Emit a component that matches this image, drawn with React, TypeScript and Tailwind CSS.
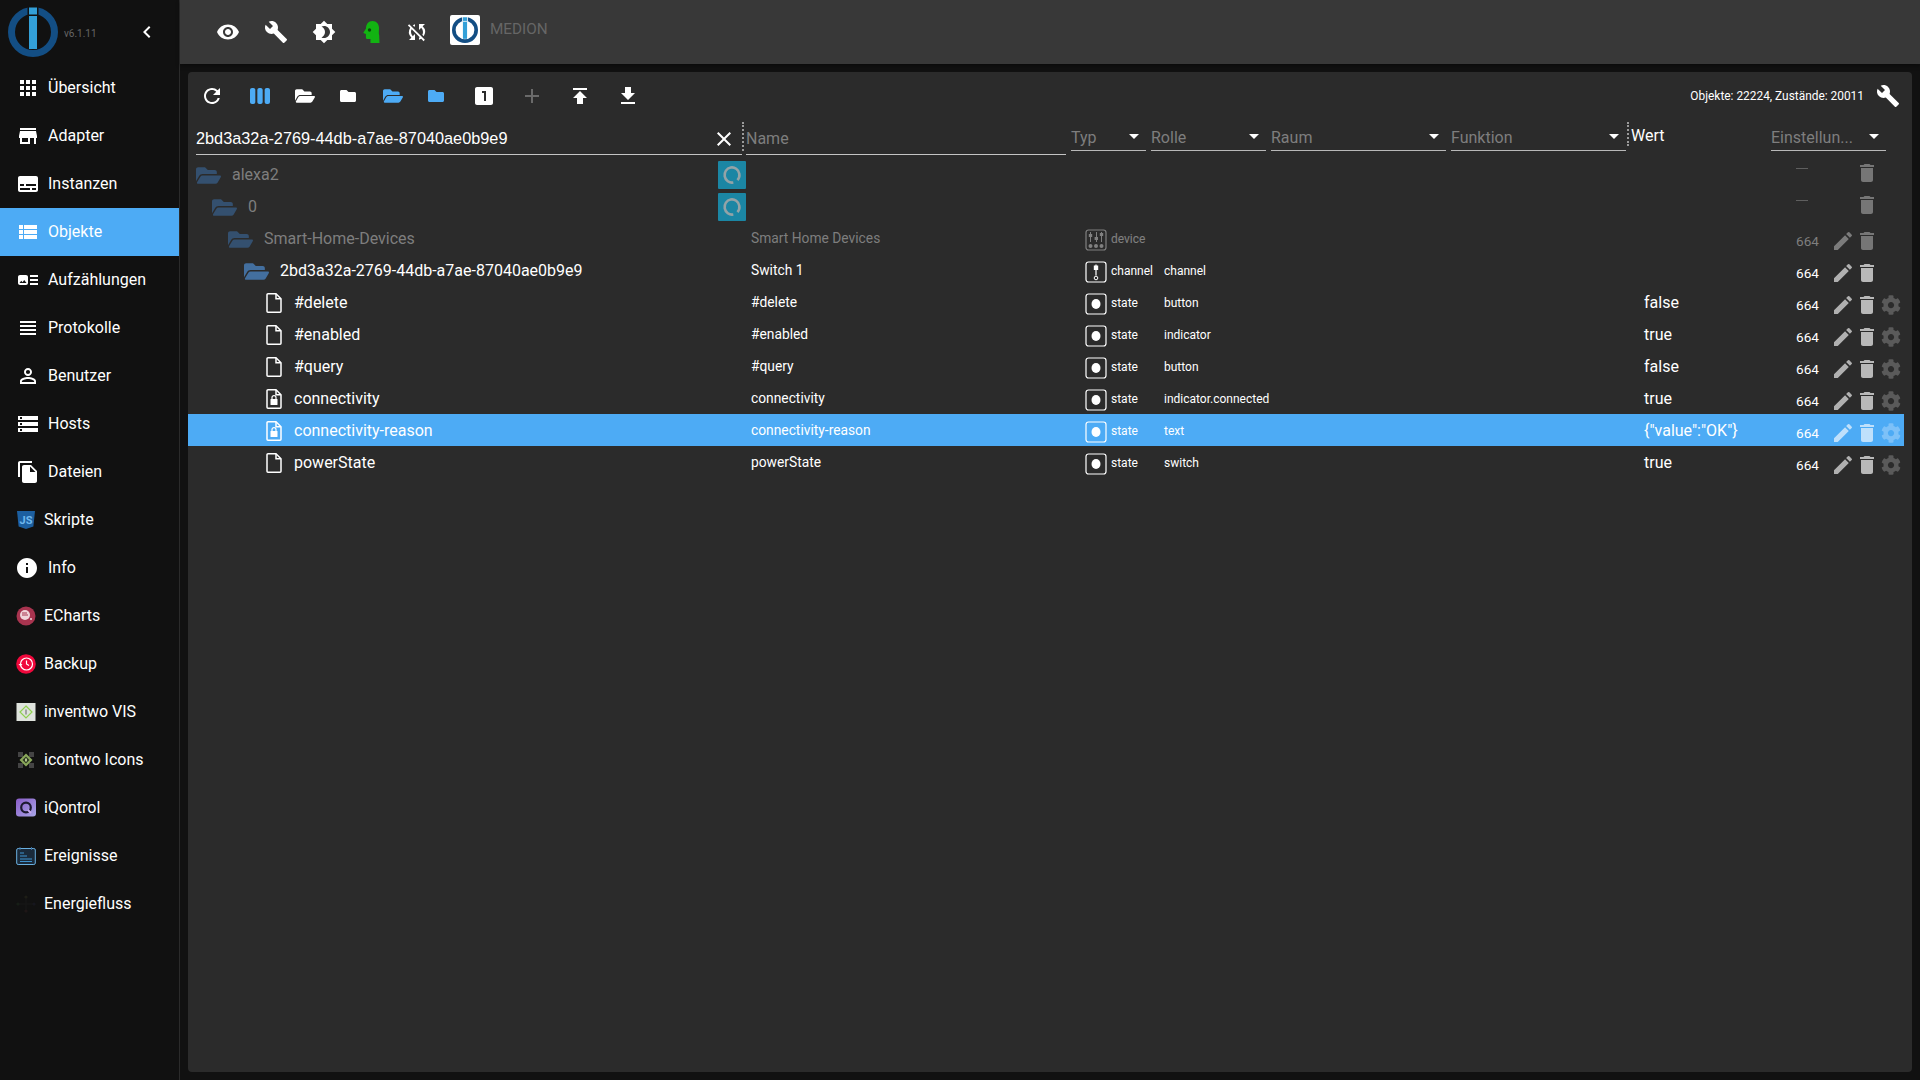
import React from "react";
import {
  MdApps, MdStore, MdSubtitles, MdViewList, MdArtTrack, MdViewHeadline, MdPersonOutline, MdStorage, MdFileCopy, MdInfo,
  MdRemoveRedEye, MdBuild, MdSyncDisabled, MdRefresh, MdViewWeek, MdLooksOne, MdAdd, MdGetApp,
  MdEdit, MdDelete, MdClose, MdChevronLeft, MdBrightness4, MdPublish,
} from "react-icons/md";
import { FaCog, FaFolderOpen, FaFolder } from "react-icons/fa";

const Logo = ({ size, bg }: { size: number; bg: string }) => (
  <svg width={size} height={size} viewBox="0 0 50 50">
    <circle cx="25" cy="25" r="21.5" fill="none" stroke="#134e84" strokeWidth="7" />
    <rect x="19.5" y="0" width="11" height="9" fill={bg} />
    <rect x="21" y="0.5" width="8" height="7" fill="#33a0d8" />
    <rect x="21" y="9" width="8" height="33" fill="#33a0d8" />
  </svg>
);

const Js = () => (
  <svg width="20" height="20" viewBox="0 0 20 20">
    <path d="M1 1h18l-1.6 15.5L10 19l-7.4-2.5z" fill="#1c5fa0" />
    <text x="10" y="13.5" textAnchor="middle" fontSize="11" fontWeight="700" fill="#6fb8ee" fontFamily="Roboto">JS</text>
  </svg>
);
const ECh = () => (
  <svg width="20" height="20" viewBox="0 0 20 20">
    <circle cx="10" cy="10" r="9.5" fill="#a8344f" />
    <circle cx="9" cy="9" r="5" fill="#f0d5da" />
    <path d="M6 9h6M6 7h5" stroke="#a8344f" strokeWidth="1" />
    <circle cx="15" cy="13" r="1" fill="#f0d5da" />
  </svg>
);
const Bak = () => (
  <svg width="20" height="20" viewBox="0 0 20 20">
    <circle cx="10" cy="10" r="9.8" fill="#f0083c" />
    <circle cx="10.5" cy="10" r="6" fill="none" stroke="#fff" strokeWidth="1.2" />
    <path d="M10.5 6.5V10l2.5 1.5" fill="none" stroke="#fff" strokeWidth="1.2" />
    <path d="M2.5 10h4l-2 2.2z" fill="#fff" />
  </svg>
);
const Inv = () => (
  <svg width="20" height="20" viewBox="0 0 20 20">
    <rect x="0.5" y="1" width="19" height="18" fill="#dfe3dd" />
    <path d="M10 4l6 6-6 6-6-6z" fill="none" stroke="#8fd050" strokeWidth="1.2" />
    <rect x="9.5" y="7.5" width="1" height="5" fill="#666" />
  </svg>
);
const Ico = () => (
  <svg width="20" height="20" viewBox="0 0 20 20">
    <g fill="#444"><rect x="2" y="2" width="5" height="5" /><rect x="13" y="2" width="5" height="5" /><rect x="2" y="13" width="5" height="5" /><rect x="13" y="13" width="5" height="5" /></g>
    <path d="M10 3.5L16.5 10 10 16.5 3.5 10z" fill="#8aa85a" />
    <path d="M10 6.5L13.5 10 10 13.5 6.5 10z" fill="#2e3a22" />
    <rect x="9" y="8.5" width="2" height="3" fill="#b5c890" />
  </svg>
);
const IQ = () => (
  <svg width="20" height="20" viewBox="0 0 20 20">
    <defs>
      <linearGradient id="iq" x1="0" y1="0" x2="1" y2="1"><stop offset="0" stopColor="#8a5cc8" /><stop offset="1" stopColor="#a9a6e8" /></linearGradient>
    </defs>
    <rect x="0" y="0.5" width="20" height="18" rx="3" fill="url(#iq)" />
    <circle cx="10" cy="9.5" r="4.8" fill="none" stroke="#1d1a30" strokeWidth="2.2" />
    <path d="M12 12l3 3" stroke="#c9a9f0" strokeWidth="2" />
  </svg>
);
const Ev = () => (
  <svg width="20" height="20" viewBox="0 0 20 20">
    <rect x="0.7" y="2.5" width="18.6" height="16" rx="1.5" fill="#1a2a3a" stroke="#6ab0e0" strokeWidth="1" />
    <path d="M4 1v3M15.5 1v3" stroke="#3a6a9a" strokeWidth="1" />
    <path d="M4 7h4M4 10h7M4 13h12M4 15.5h12" stroke="#3f93cf" strokeWidth="1.1" />
  </svg>
);
const En = () => (
  <svg width="20" height="20" viewBox="0 0 20 20" opacity="0.5">
    <circle cx="10" cy="3" r="1.6" fill="#2c2c1c" />
    <circle cx="2" cy="10" r="1.6" fill="#1c2c1c" />
    <circle cx="18" cy="10" r="1.6" fill="#1c1c2c" />
    <circle cx="10" cy="17" r="1.6" fill="#2c1c1c" />
    <path d="M10 4v12M3 10h14" stroke="#222" strokeWidth="0.8" />
  </svg>
);

const navTop: [any, string][] = [
  [MdApps, "Übersicht"],
  [MdStore, "Adapter"],
  [MdSubtitles, "Instanzen"],
  [MdViewList, "Objekte"],
  [MdArtTrack, "Aufzählungen"],
  [MdViewHeadline, "Protokolle"],
  [MdPersonOutline, "Benutzer"],
  [MdStorage, "Hosts"],
  [MdFileCopy, "Dateien"],
];
const navImg: [any, string][] = [
  [Js, "Skripte"],
  [null, "Info"],
  [ECh, "ECharts"],
  [Bak, "Backup"],
  [Inv, "inventwo VIS"],
  [Ico, "icontwo Icons"],
  [IQ, "iQontrol"],
  [Ev, "Ereignisse"],
  [En, "Energiefluss"],
];

const Sidebar = () => (
  <aside className="w-[180px] shrink-0 bg-[#111111] border-r border-[#2b2b2b] h-[1080px] text-white">
    <div className="h-[64px] flex items-center pl-[8px]">
      <Logo size={50} bg="#111111" />
      <span className="ml-[6px] mt-[2px] text-[10px] text-[#666666] w-[71px]">v6.1.11</span>
      <MdChevronLeft size={24} className="text-white" />
    </div>
    {navTop.map(([I, t]) => (
      <div key={t} className={`h-[48px] flex items-center pl-[16px] ${t === "Objekte" ? "bg-[#4dabf5]" : ""}`}>
        <I size={24} className="shrink-0" />
        <span className="ml-[8px] text-[16px]">{t}</span>
      </div>
    ))}
    {navImg.map(([I, t]) => (
      <div key={t} className="h-[48px] flex items-center pl-[16px]">
        {I ? <I /> : <MdInfo size={24} className="shrink-0 -ml-[1px]" />}
        <span className={`text-[16px] ${I ? "ml-[8px]" : "ml-[9px]"}`}>{t}</span>
      </div>
    ))}
  </aside>
);

const TopBar = () => (
  <div className="h-[64px] bg-[#383838] flex items-center pl-[24px] shadow-[0_2px_4px_rgba(0,0,0,0.4)]">
    {[MdRemoveRedEye, MdBuild, MdBrightness4].map((I, i) => (
      <div key={i} className="w-[48px] h-[48px] flex items-center justify-center text-white"><I size={24} /></div>
    ))}
    <div className="w-[46px] h-[48px] flex items-center justify-center">
      <svg width="17" height="22" viewBox="0 0 17 22">
        <path d="M9.5 0C13.5 0 16 3 16 7c0 3-.5 5 .2 7.5l.3 7.5H7.5v-4H4.5c-1.2 0-1.6-.8-1.6-1.8V13L.8 12.3C.3 12 .4 11.4.8 11L3 7.5C3 3 5.5 0 9.5 0z" fill="#12b312" />
        <circle cx="6.5" cy="9" r="1.7" fill="#0b4a0b" />
      </svg>
    </div>
    <div className="w-[46px] h-[48px] flex items-center justify-center text-white"><MdSyncDisabled size={24} /></div>
    <div className="ml-[10px] mb-[5px] w-[30px] h-[30px] bg-white rounded-[2px] flex items-center justify-center">
      <Logo size={26} bg="#ffffff" />
    </div>
    <span className="ml-[10px] mb-[6px] text-[15.3px] text-[#666666]">MEDION</span>
  </div>
);

const Btn = ({ w, c, children }: { w: string; c: string; children: React.ReactNode }) => (
  <div className={`${w} h-[48px] flex items-center justify-center ${c}`}>{children}</div>
);

const Toolbar = () => (
  <div className="h-[48px] flex items-center">
    <Btn w="w-[48px]" c="text-white"><MdRefresh size={24} /></Btn>
    <Btn w="w-[47px]" c="text-[#4dabf5]"><MdViewWeek size={24} /></Btn>
    <Btn w="w-[44px]" c="text-white"><FaFolderOpen size={20} /></Btn>
    <Btn w="w-[44px]" c="text-white"><FaFolder size={16} className="-translate-x-[1px]" /></Btn>
    <Btn w="w-[44px]" c="text-[#4dabf5]"><FaFolderOpen size={20} /></Btn>
    <Btn w="w-[44px]" c="text-[#4dabf5]"><FaFolder size={16} className="-translate-x-[1px]" /></Btn>
    <Btn w="w-[49px]" c="text-white"><MdLooksOne size={24} /></Btn>
    <Btn w="w-[48px]" c="text-[#6a6a6a]"><MdAdd size={24} /></Btn>
    <Btn w="w-[48px]" c="text-white"><MdPublish size={24} /></Btn>
    <Btn w="w-[48px]" c="text-white"><MdGetApp size={24} /></Btn>
    <div className="ml-auto flex items-center pr-[12px]">
      <span className="text-[11.9px] text-white pt-[2px]">Objekte: 22224, Zustände: 20011</span>
      <MdBuild size={24} className="ml-[12px] text-white" />
    </div>
  </div>
);

const Tri = () => (
  <svg width="10" height="5" viewBox="0 0 10 5" className="shrink-0"><path d="M0 0h10L5 5z" fill="#ffffff" /></svg>
);

const Sel = ({ w, ml, label }: { w: string; ml: string; label: string }) => (
  <div className={`${w} ${ml} h-[28px] border-b border-[#b8b8b8] flex items-center justify-between pr-[7px] text-[16px] text-[#7e7e7e]`}>
    <span className="mt-[2px]">{label}</span>
    <Tri />
  </div>
);

const Filter = () => (
  <div className="h-[38px] flex items-start">
    <div className="ml-[8px] w-[546px] h-[35px] border-b border-[#c4c4c4] flex items-center justify-between pr-[6px] pt-[3px]">
      <span className="text-[16.3px] text-white font-['Liberation_Sans']">2bd3a32a-2769-44db-a7ae-87040ae0b9e9</span>
      <MdClose size={24} className="text-white" />
    </div>
    <div className="w-[4px] h-[29px] mt-[2px] border-l-2 border-dotted border-[#9a9a9a]" />
    <div className="w-[320px] h-[35px] border-b border-[#c4c4c4] flex items-center pt-[3px] text-[16px] text-[#7e7e7e]">Name</div>
    <div className="flex items-start mt-[3px] flex-1">
      <Sel w="w-[75px]" ml="ml-[5px]" label="Typ" />
      <Sel w="w-[115px]" ml="ml-[5px]" label="Rolle" />
      <Sel w="w-[175px]" ml="ml-[5px]" label="Raum" />
      <Sel w="w-[175px]" ml="ml-[5px]" label="Funktion" />
      <div className="ml-[1px] w-[4px] h-[24px] -mt-[1px] border-l-2 border-dotted border-[#9a9a9a]" />
      <div className="w-[140px] h-[24px] flex items-center pt-[1px] text-[16px] text-white">Wert</div>
      <Sel w="w-[115px]" ml="" label="Einstellun..." />
    </div>
  </div>
);

const FileLock = () => (
  <svg width="16" height="20" viewBox="0 0 16 20">
    <path d="M1 1.8a1 1 0 0 1 1-1h8l5 5v12.4a1 1 0 0 1-1 1H2a1 1 0 0 1-1-1z" fill="none" stroke="#fff" strokeWidth="1.5" strokeLinejoin="round" />
    <path d="M10 .8v5h5" fill="none" stroke="#fff" strokeWidth="1.5" />
    <rect x="4.5" y="10" width="7" height="6" rx="0.5" fill="#fff" />
    <path d="M6 10V8.6a2 2 0 0 1 4 0V10" fill="none" stroke="#fff" strokeWidth="1.2" />
  </svg>
);
const FilePlain = () => (
  <svg width="16" height="20" viewBox="0 0 16 20">
    <path d="M1 1.8a1 1 0 0 1 1-1h8l5 5v12.4a1 1 0 0 1-1 1H2a1 1 0 0 1-1-1z" fill="none" stroke="#fff" strokeWidth="1.5" strokeLinejoin="round" />
    <path d="M10 .8v5h5" fill="none" stroke="#fff" strokeWidth="1.5" />
  </svg>
);

const Alexa = () => (
  <div className="w-[28px] h-[28px] bg-[#1b86a4] rounded-[1px] flex items-center justify-center shrink-0">
    <svg width="22" height="22" viewBox="0 0 22 22">
      <ellipse cx="11" cy="11" rx="7.6" ry="7.4" fill="none" stroke="#93a3a7" strokeWidth="2.6" strokeDasharray="42 5" transform="rotate(80 11 11)" />
    </svg>
  </div>
);

const TypeIcon = ({ kind }: { kind: string }) => (
  <svg width="22" height="22" viewBox="0 0 22 22" className="shrink-0 mt-[1px]">
    <rect x="1" y="1" width="20" height="20" rx="2.5" fill="none" stroke="#ffffff" strokeWidth="1.2" />
    {kind === "state" && <ellipse cx="11" cy="11" rx="4.5" ry="5" fill="#fff" />}
    {kind === "channel" && (
      <g fill="#fff">
        <rect x="10.4" y="3.5" width="1.2" height="11" />
        <rect x="8.8" y="4.5" width="4.4" height="4.5" />
        <circle cx="11" cy="17" r="1.8" fill="none" stroke="#fff" strokeWidth="1" />
      </g>
    )}
    {kind === "device" && (
      <g fill="#fff">
        <rect x="5" y="3" width="1" height="10" />
        <rect x="11" y="3" width="1" height="10" />
        <rect x="16" y="3" width="1" height="10" />
        <rect x="3.8" y="5" width="3.4" height="3" />
        <rect x="9.6" y="8" width="3.4" height="3" />
        <rect x="14.8" y="4" width="3.4" height="3" />
        <circle cx="5.5" cy="17" r="2" />
        <circle cx="11" cy="17" r="2" />
        <circle cx="16.5" cy="17" r="2" />
      </g>
    )}
  </svg>
);

type R = {
  label: string; depth: number; kind: "folder" | "file" | "lock"; alexa?: boolean; dim?: boolean; name?: string;
  type?: string; role?: string; value?: string; sel?: boolean; acl?: boolean; gear?: boolean;
};

const rows: R[] = [
  { label: "alexa2", depth: 0, kind: "folder", alexa: true, dim: true },
  { label: "0", depth: 1, kind: "folder", alexa: true, dim: true },
  { label: "Smart-Home-Devices", depth: 2, kind: "folder", dim: true, name: "Smart Home Devices", type: "device", acl: true },
  { label: "2bd3a32a-2769-44db-a7ae-87040ae0b9e9", depth: 3, kind: "folder", name: "Switch 1", type: "channel", role: "channel", acl: true },
  { label: "#delete", depth: 4, kind: "file", name: "#delete", type: "state", role: "button", value: "false", acl: true, gear: true },
  { label: "#enabled", depth: 4, kind: "file", name: "#enabled", type: "state", role: "indicator", value: "true", acl: true, gear: true },
  { label: "#query", depth: 4, kind: "file", name: "#query", type: "state", role: "button", value: "false", acl: true, gear: true },
  { label: "connectivity", depth: 4, kind: "lock", name: "connectivity", type: "state", role: "indicator.connected", value: "true", acl: true, gear: true },
  { label: "connectivity-reason", depth: 4, kind: "lock", name: "connectivity-reason", type: "state", role: "text", value: '{"value":"OK"}', acl: true, gear: true, sel: true },
  { label: "powerState", depth: 4, kind: "file", name: "powerState", type: "state", role: "switch", value: "true", acl: true, gear: true },
];

const indent: Record<number, string> = { 0: "pl-[8px]", 1: "pl-[24px]", 2: "pl-[40px]", 3: "pl-[56px]", 4: "pl-[78px]" };

const Row = ({ r }: { r: R }) => {
  const textCol = r.dim ? "text-[#7e7e7e]" : "text-white";
  return (
    <div className={`w-[1716px] h-[32px] pt-[2px] flex items-center ${r.sel ? "bg-[#4dabf5]" : ""}`}>
      <div className={`w-[558px] h-full flex items-center justify-between ${indent[r.depth]}`}>
        <div className="flex items-center">
          {r.kind === "folder" ? (
            <span className={r.dim ? "w-[36px] text-[#34506f]" : "w-[36px] text-[#436f9f]"}><FaFolderOpen size={25} /></span>
          ) : (
            <span className="w-[28px] flex">{r.kind === "lock" ? <FileLock /> : <FilePlain />}</span>
          )}
          <span className={`text-[16px] ${textCol}`}>{r.label}</span>
        </div>
        {r.alexa && <Alexa />}
      </div>
      <div className={`w-[339px] pl-[5px] pb-[2px] text-[13.8px] ${r.dim ? "text-[#7e7e7e]" : "text-white"}`}>{r.name}</div>
      <div className={`w-[79px] flex items-center ${r.dim ? "opacity-40" : ""}`}>
        {r.type && (
          <>
            <TypeIcon kind={r.type} />
            <span className="ml-[4px] text-[12px] text-white">{r.type}</span>
          </>
        )}
      </div>
      <div className="w-[480px] text-[12px] text-white">{r.role}</div>
      <div className="w-[152px] text-[16px] text-white">{r.value}</div>
      {r.acl ? (
        <div className="flex items-center pt-[4px] flex-1">
          <span className={`w-[38px] text-[13.6px] ${r.dim ? "text-[#7e7e7e]" : "text-white"}`}>664</span>
          <span className={`w-[26px] flex ${r.dim ? "opacity-60" : ""} ${r.sel ? "text-[#bfe0fb]" : "text-[#b0b0b0]"}`}><MdEdit size={24} className="-ml-[3px]" /></span>
          <span className={`w-[21px] flex ${r.dim ? "text-[#767676]" : r.sel ? "text-[#bfe0fb]" : "text-[#b8b8b8]"}`}><MdDelete size={24} className="-ml-[5px]" /></span>
          {r.gear && <span className={`flex ${r.sel ? "text-[#7dc1f8]" : "text-[#5a5a5a]"}`}><FaCog size={20} /></span>}
        </div>
      ) : (
        <div className="flex items-center flex-1 pb-[4px]">
          <span className="w-[64px] flex"><span className="w-[12px] h-[1px] bg-[#5f5f5f] mb-[10px]" /></span>
          <span className="w-[21px] flex text-[#767676]"><MdDelete size={24} className="-ml-[5px]" /></span>
        </div>
      )}
    </div>
  );
};

export default function App() {
  return (
    <div className="w-[1920px] h-[1080px] overflow-hidden flex bg-[#111111] font-['Roboto',sans-serif]">
      <Sidebar />
      <div className="flex-1 flex flex-col min-w-0">
        <TopBar />
        <div className="m-[8px] h-[1000px] bg-[#2b2b2b] rounded-[4px]">
          <Toolbar />
          <Filter />
          {rows.map((r) => <Row key={r.label} r={r} />)}
        </div>
      </div>
    </div>
  );
}
